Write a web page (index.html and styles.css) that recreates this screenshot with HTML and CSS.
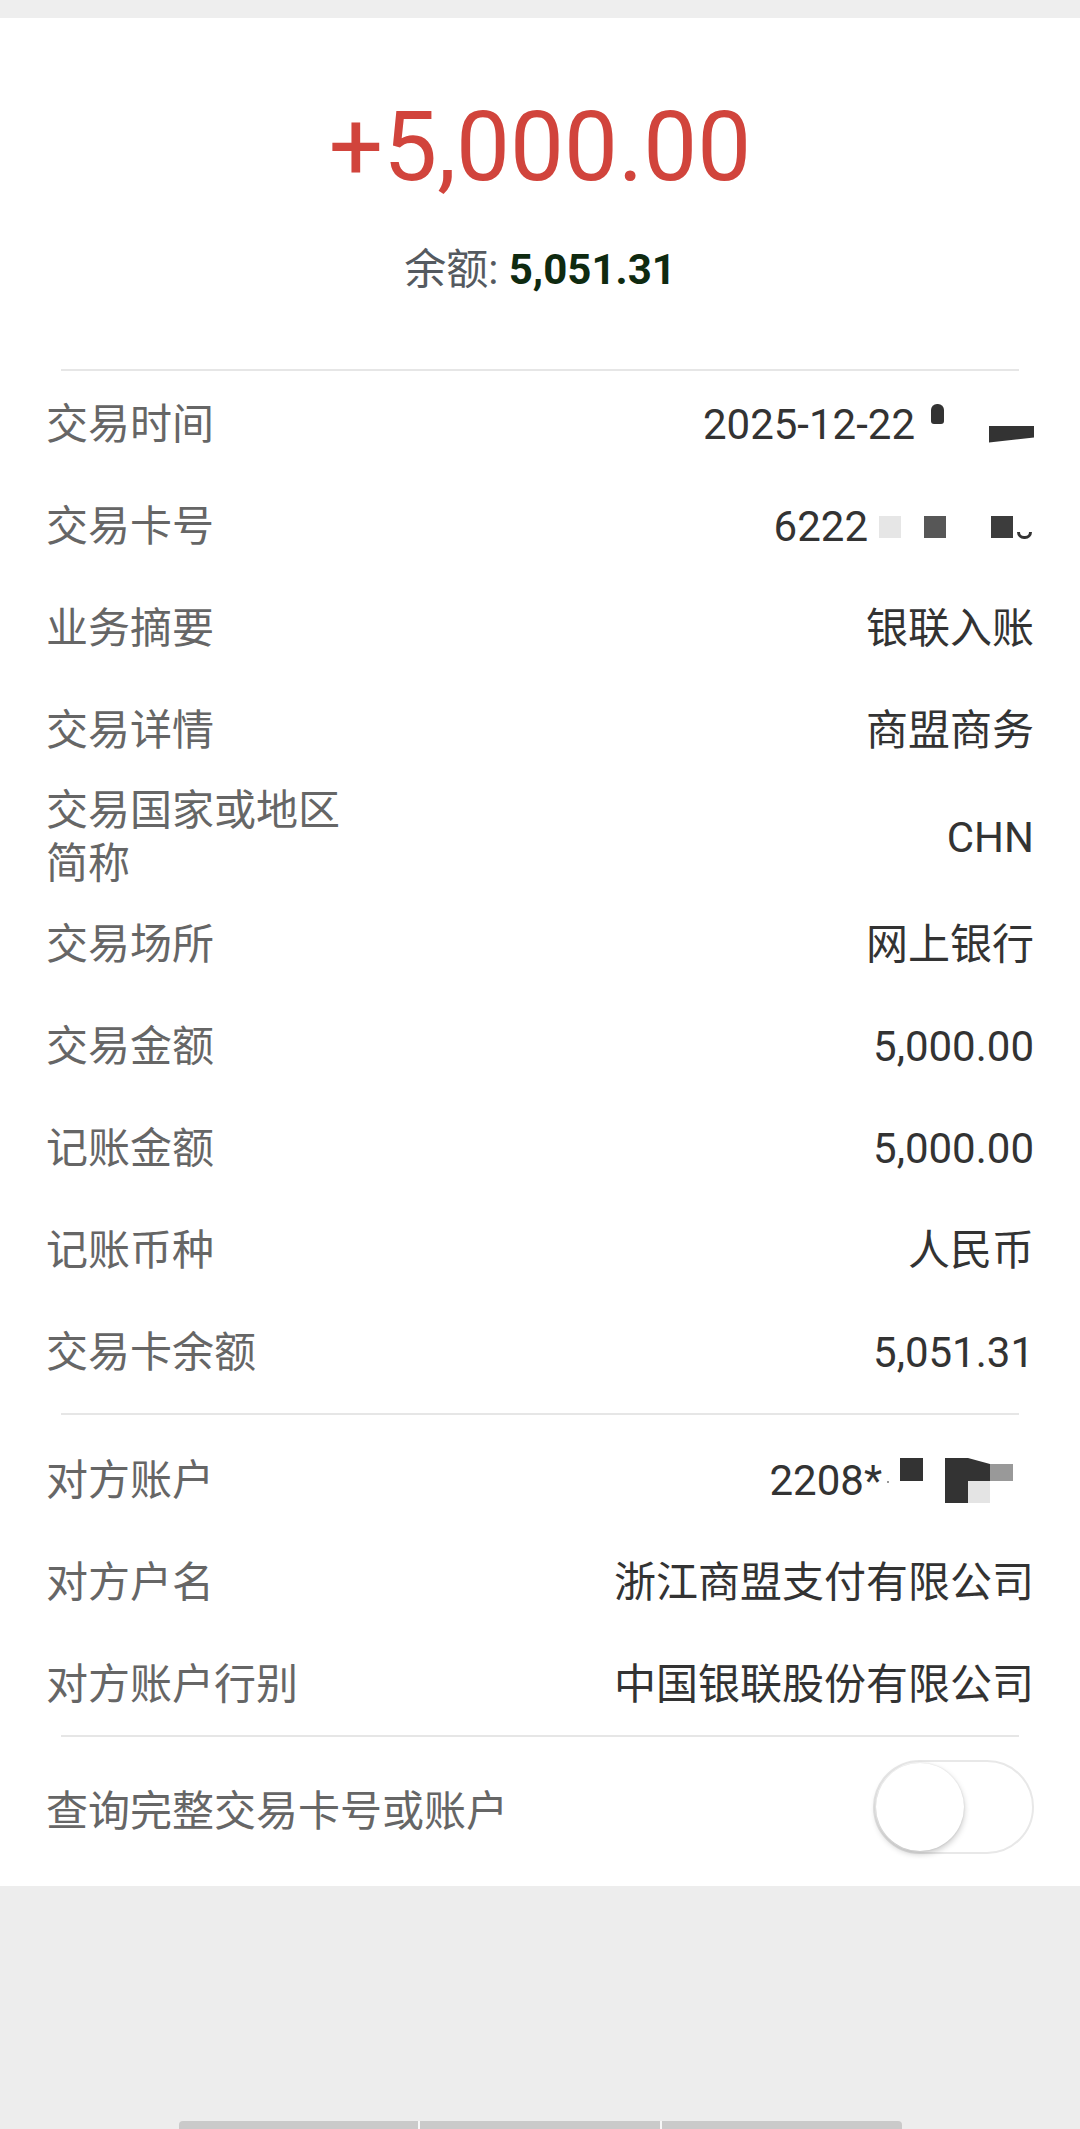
FILE: index.html
```html
<!DOCTYPE html>
<html lang="zh-CN">
  <head>
    <meta http-equiv="Content-Type" content="text/html;charset=UTF-8" />
    <meta name="viewport" content="width=device-width, initial-scale=1.0" />
    <title>交易详情</title>
    <link rel="stylesheet" href="styles.css">
  </head>
  <body>
    <div class="page">
      <div class="topbar"></div>

      <main class="detail">
        <header class="summary">
          <div class="amount">+5,000.00</div>
          <div class="balance">
            <span class="balance-label">余额:</span> <b class="balance-value">5,051.31</b>
          </div>
        </header>

        <div class="divider"></div>

        <section class="group group-main">
          <div class="row">
            <span class="label">交易时间</span>
            <span class="value">2025-12-22<i class="mask mask-blob"></i><i class="mask mask-bar"></i></span>
          </div>
          <div class="row">
            <span class="label">交易卡号</span>
            <span class="value">6222<i class="mask mask-sq mask-light"></i><i class="mask mask-sq mask-mid"></i><i class="mask mask-sq mask-dark"></i><i class="mask mask-arc"></i></span>
          </div>
          <div class="row">
            <span class="label">业务摘要</span>
            <span class="value">银联入账</span>
          </div>
          <div class="row">
            <span class="label">交易详情</span>
            <span class="value">商盟商务</span>
          </div>
          <div class="row">
            <span class="label">交易国家或地区简称</span>
            <span class="value">CHN</span>
          </div>
          <div class="row">
            <span class="label">交易场所</span>
            <span class="value">网上银行</span>
          </div>
          <div class="row">
            <span class="label">交易金额</span>
            <span class="value">5,000.00</span>
          </div>
          <div class="row">
            <span class="label">记账金额</span>
            <span class="value">5,000.00</span>
          </div>
          <div class="row">
            <span class="label">记账币种</span>
            <span class="value">人民币</span>
          </div>
          <div class="row">
            <span class="label">交易卡余额</span>
            <span class="value">5,051.31</span>
          </div>
        </section>

        <div class="divider"></div>

        <section class="group group-other">
          <div class="row">
            <span class="label">对方账户</span>
            <span class="value">2208*<i class="mask mask-dot"></i><i class="mask mask-block"></i><svg class="mask-pixels" width="68" height="45" viewBox="0 0 68 45">
                <rect x="0" y="0" width="23" height="45" fill="#333" />
                <polygon points="23,0 45,6 45,23 23,23" fill="#333" />
                <rect x="23" y="23" width="22" height="22" fill="#e4e4e4" />
                <rect x="45" y="6" width="23" height="17" fill="#999" />
              </svg></span>
          </div>
          <div class="row">
            <span class="label">对方户名</span>
            <span class="value">浙江商盟支付有限公司</span>
          </div>
          <div class="row">
            <span class="label">对方账户行别</span>
            <span class="value">中国银联股份有限公司</span>
          </div>
        </section>

        <div class="divider"></div>

        <div class="row row-switch">
          <span class="label label-wide">查询完整交易卡号或账户</span>
          <span class="switch"><span class="knob"></span></span>
        </div>
      </main>

      <div class="filler"></div>

      <div class="nav-bars">
        <span></span><span></span><span></span>
      </div>
    </div>
  </body>
</html>
```

FILE: styles.css
```css
body {
  margin: 0;
  padding: 0;
  background-color: #ededed;
  font-family: Roboto, "Noto Sans CJK SC", sans-serif;
  color: #333333;
}

.page {
  min-height: 100vh;
  display: flex;
  flex-direction: column;
}

.topbar {
  height: 18px;
  background: #eeeeee;
}

.detail {
  background: #ffffff;
}

/* Amount header */
.summary {
  padding: 71px 0 73px;
  text-align: center;
}

.amount {
  font-size: 96px;
  line-height: 116px;
  color: #d1443c;
}

.balance {
  margin-top: 38px;
  font-size: 42px;
  line-height: 53px;
}

.balance-label {
  color: #555a60;
}

.balance-value {
  font-weight: bold;
  color: #0f2a10;
}

.divider {
  height: 2px;
  margin: 0 61px;
  background: #e6e6e6;
}

/* Detail rows */
.group-main {
  padding: 2px 0 10px;
}

.group-other {
  padding-top: 14px;
}

.row {
  display: flex;
  justify-content: space-between;
  align-items: center;
  box-sizing: border-box;
  min-height: 102px;
  padding: 3px 46px;
  font-size: 42px;
  line-height: 53px;
}

.label {
  max-width: 300px;
  color: #666666;
}

.label-wide {
  max-width: none;
}

.value {
  text-align: right;
  white-space: nowrap;
  color: #333333;
}

/* Redaction marks on card / account numbers */
.mask {
  display: inline-block;
  vertical-align: baseline;
}

.mask-blob {
  width: 13px;
  height: 20px;
  margin-left: 16px;
  margin-bottom: 15px;
  background: #333;
  border-radius: 6px 6px 3px 3px;
}

.mask-bar {
  width: 45px;
  height: 17px;
  margin-left: 45px;
  margin-bottom: -4px;
  background: #333;
  clip-path: polygon(0 0, 100% 0, 100% 70%, 0 100%);
}

.mask-sq {
  width: 22px;
  height: 22px;
  margin-bottom: 3px;
}

.mask-light {
  margin-left: 11px;
  background: #e6e6e6;
}

.mask-mid {
  margin-left: 23px;
  background: #575757;
}

.mask-dark {
  margin-left: 45px;
  background: #3c3c3c;
}

.mask-arc {
  box-sizing: border-box;
  width: 15px;
  height: 7px;
  margin-left: 4px;
  margin-right: 2px;
  margin-bottom: 2px;
  border: 3px solid #333;
  border-top: none;
  border-radius: 0 0 8px 8px;
}

.mask-dot {
  width: 2px;
  height: 2px;
  margin-left: 5px;
  margin-bottom: 12px;
  background: #999;
}

.mask-block {
  width: 23px;
  height: 23px;
  margin-left: 11px;
  margin-bottom: 14px;
  background: #333;
}

.mask-pixels {
  display: inline-block;
  vertical-align: baseline;
  margin-left: 22px;
  margin-right: 21px;
  margin-bottom: -8px;
}

/* Toggle row */
.row-switch {
  min-height: 149px;
}

.switch {
  display: flex;
  align-items: center;
  box-sizing: border-box;
  width: 161px;
  height: 94px;
  margin-bottom: 9px;
  padding: 0 1px;
  border: 2px solid #e8e8e8;
  border-radius: 47px;
  background: #ffffff;
}

.knob {
  width: 88px;
  height: 88px;
  border-radius: 50%;
  background: #ffffff;
  box-shadow: 0 3px 6px rgba(0, 0, 0, 0.22), 0 0 2px rgba(0, 0, 0, 0.12);
}

.filler {
  flex: 1;
}

.nav-bars {
  display: flex;
  width: 723px;
  height: 8px;
  margin: 0 auto;
}

.nav-bars span {
  flex: 1;
  background: #cacaca;
}

.nav-bars span + span {
  border-left: 2px solid #f7f7f7;
}

.nav-bars span:first-child {
  border-radius: 4px 0 0 0;
}

.nav-bars span:last-child {
  border-radius: 0 4px 0 0;
}
```
